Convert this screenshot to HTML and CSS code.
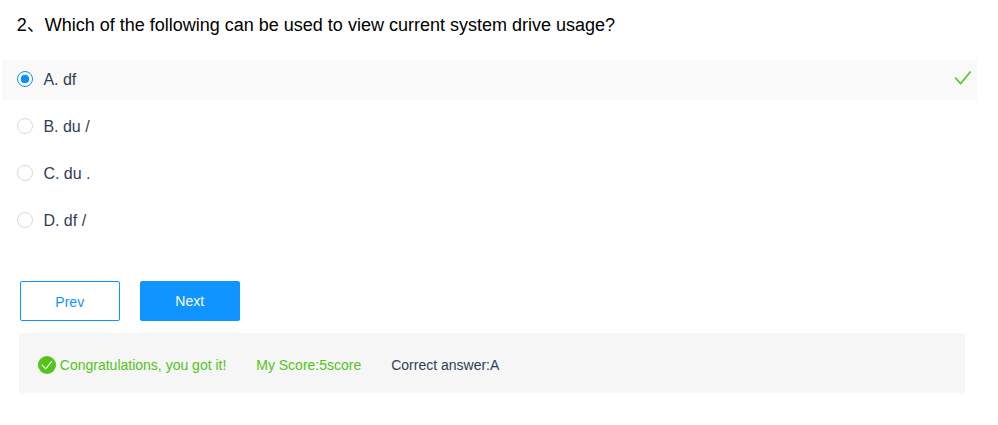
FILE: index.html
```html
<!DOCTYPE html>
<html lang="en">
<head>
<meta charset="utf-8">
<title>Quiz</title>
<link rel="stylesheet" href="styles.css">
</head>
<body>
<main class="quiz">
  <h1 class="question">2、Which of the following can be used to view current system drive usage?</h1>
  <div class="options">
    <label class="option selected"><span class="radio checked"></span><span class="text">A. df</span>
      <svg class="tick" viewBox="0 0 18 16"><path d="M1.2 7.7L6.6 13.5L16.7 1.5"/></svg></label>
    <label class="option"><span class="radio"></span><span class="text">B. du /</span></label>
    <label class="option"><span class="radio"></span><span class="text">C. du .</span></label>
    <label class="option"><span class="radio"></span><span class="text">D. df /</span></label>
  </div>
  <div class="actions">
    <button class="btn">Prev</button>
    <button class="btn primary">Next</button>
  </div>
  <div class="result">
    <svg class="badge" viewBox="0 0 18 18"><circle cx="9" cy="9" r="9"/><path d="M3.7 8.7L7.7 12.9L14 5"/></svg>
    <span class="good">Congratulations, you got it!</span>
    <span class="good score">My Score:5score</span>
    <span class="answer">Correct answer:A</span>
  </div>
</main>
</body>
</html>
```

FILE: styles.css
```css
* { box-sizing: border-box; }
body { margin: 0; background: #fff; font-family: "Liberation Sans", "Noto Sans CJK SC", sans-serif; color: #2f4056; }
.quiz { padding: 10px 0 0; }
.question { margin: 0 0 20px 16.7px; height: 30px; font-size: 18px; line-height: 30px; font-weight: 400; color: #000; }
.options { display: flex; flex-direction: column; gap: 7px; margin: 0 21px 0 2px; }
.option { display: flex; align-items: center; height: 40px; padding: 0 5px 2px 15px; font-size: 16px; line-height: 24px; }
.text { padding-top: 2px; }
.selected { background: #f9f9f9; }
.radio { width: 16px; height: 16px; margin-right: 10.4px; border: 1px solid #d9d9d9; border-radius: 50%; background: #fff; }
.checked { border-color: #0a8fff; background: radial-gradient(circle, #0a8fff 4px, #fff 4.6px); }
.tick { width: 18px; height: 16px; margin: 0 0 2px auto; fill: none; stroke: #52c41a; stroke-width: 1.6; }
.actions { display: flex; gap: 20px; margin: 40px 0 0 20px; }
.btn { width: 100px; height: 40px; padding: 2px 0.5px 0 0; border: 1px solid #1094ff; border-radius: 2px; background: #fff; color: #1094ff; font: 14px "Liberation Sans", sans-serif; }
.primary { padding: 0 0.5px 0 0; background: #1094ff; color: #fff; }
.result { display: flex; align-items: center; height: 60px; margin: 12px 33px 0 19px; padding: 4px 0 0 19px; border-radius: 3px; background: #f6f6f6; font-size: 14px; }
.badge { width: 18px; height: 18px; margin-right: 3.8px; }
.badge circle { fill: #52c41a; }
.badge path { fill: none; stroke: #fff; stroke-width: 1.2; }
.good { color: #52c41a; }
.score, .answer { margin-left: 29.9px; }
```
